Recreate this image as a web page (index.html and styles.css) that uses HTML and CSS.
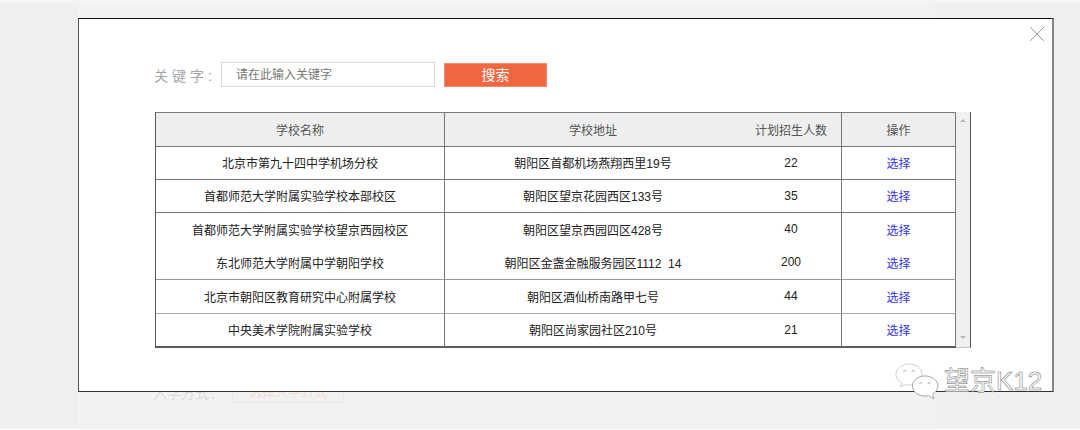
FILE: index.html
```html
<!DOCTYPE html>
<html lang="zh-CN">
<head>
<meta charset="utf-8">
<title>选择学校</title>
<link rel="stylesheet" href="styles.css">
</head>
<body>
<div class="page">
  <div class="behind">
    <span class="behind-label">入学方式：</span>
    <span class="behind-select">选择入学方式</span>
  </div>
</div>

<div class="modal">
  <svg class="close" width="16" height="16" viewBox="0 0 16 16"><path d="M1 1L15 15M15 1L1 15" fill="none" stroke="#9a9a9a" stroke-width="1"/></svg>
  <div class="search">
    <span class="label">关键字<span class="colon">:</span></span>
    <div class="input">请在此输入关键字</div>
    <div class="btn">搜索</div>
  </div>
  <div class="table-wrap">
    <table class="tbl">
      <thead>
        <tr><th class="c-name">学校名称</th><th class="c-addr">学校地址</th><th class="c-num">计划招生人数</th><th class="c-op">操作</th></tr>
      </thead>
      <tbody>
        <tr><td class="c-name">北京市第九十四中学机场分校</td><td class="c-addr">朝阳区首都机场燕翔西里19号</td><td class="c-num">22</td><td class="c-op"><a class="pick">选择</a></td></tr>
        <tr><td class="c-name">首都师范大学附属实验学校本部校区</td><td class="c-addr">朝阳区望京花园西区133号</td><td class="c-num">35</td><td class="c-op"><a class="pick">选择</a></td></tr>
        <tr class="no-line"><td class="c-name">首都师范大学附属实验学校望京西园校区</td><td class="c-addr">朝阳区望京西园四区428号</td><td class="c-num">40</td><td class="c-op"><a class="pick">选择</a></td></tr>
        <tr class="tall light"><td class="c-name">东北师范大学附属中学朝阳学校</td><td class="c-addr">朝阳区金盏金融服务园区1112&nbsp;&nbsp;14</td><td class="c-num">200</td><td class="c-op"><a class="pick">选择</a></td></tr>
        <tr class="tall lighter"><td class="c-name">北京市朝阳区教育研究中心附属学校</td><td class="c-addr">朝阳区酒仙桥南路甲七号</td><td class="c-num">44</td><td class="c-op"><a class="pick">选择</a></td></tr>
        <tr class="tall last"><td class="c-name">中央美术学院附属实验学校</td><td class="c-addr">朝阳区尚家园社区210号</td><td class="c-num">21</td><td class="c-op"><a class="pick">选择</a></td></tr>
      </tbody>
    </table>
    <div class="scrollbar">
      <svg width="8" height="5" viewBox="0 0 8 5"><path d="M4 1L7 4H1Z" fill="#b5b5b5"/></svg>
      <svg width="8" height="5" viewBox="0 0 8 5"><path d="M4 4L7 1H1Z" fill="#b5b5b5"/></svg>
    </div>
  </div>
</div>

<div class="mark">
  <svg width="44" height="37" viewBox="0 0 44 37">
    <path d="M14 1C6.800 1 1 5.600 1 11.300C1 15 3.300 18 7 20L5 24L10.500 21.500C12 22 13 22 15 22C20 22 27 18 27 11.300C27 5.600 21.200 1 14 1Z" fill="#fff" stroke="#cfcfcf"/>
    <path d="M30 13C23 13 17.500 17.300 17.500 23C17.500 28.700 23 33 30 33C31.500 33 32.500 33 33.500 32.500L39 36L37.500 31C41 29 43 26.300 43 23C43 17.300 37 13 30 13Z" fill="#fff" stroke="#a8a8a8"/>
    <path d="M8.500 8.500a1.300 1.300 0 0 1 2.500 0M17 8.500a1.300 1.300 0 0 1 2.500 0M24.500 20.500a1.200 1.200 0 0 1 2.300 0M33 20.500a1.200 1.200 0 0 1 2.300 0" fill="none" stroke="#999"/>
  </svg>
  <span class="mark-text">望京K12</span>
</div>
</body>
</html>
```

FILE: styles.css
```css
html, body {
  margin: 0;
  padding: 0;
}
body {
  width: 1080px;
  height: 430px;
  overflow: hidden;
  background: #fff;
  font-family: "Liberation Sans", "Noto Sans CJK SC", sans-serif;
  font-size: 12px;
  position: relative;
}
.page {
  box-sizing: border-box;
  height: 429px;
  background: #efefef;
  border-top: 3px solid #f5f5f5;
  padding: 0 145px 0 78px;
}
.behind {
  box-sizing: border-box;
  height: 426px;
  background: #f2f2f2;
  padding: 378px 0 0 75px;
  display: flex;
  align-items: flex-start;
  gap: 9px;
}
.behind-label {
  color: #dcdcdc;
  font-size: 14px;
  line-height: 24px;
}
.behind-select {
  box-sizing: border-box;
  width: 112px;
  height: 22px;
  border: 1px solid #e8e8e8;
  color: #f5dcd5;
  font-size: 13px;
  line-height: 20px;
  text-align: center;
}
.modal {
  position: absolute;
  left: 78px;
  top: 18px;
  box-sizing: border-box;
  width: 976px;
  height: 374px;
  background: #fff;
  border-top: 1px solid #111;
  border-left: 1px solid #555;
  border-right: 2px solid #858585;
  border-bottom: 1px solid #333;
  padding: 43px 0 0 75px;
}
.close {
  position: absolute;
  right: 7px;
  top: 7px;
}
.search {
  display: flex;
  align-items: center;
  height: 25px;
}
.label {
  width: 67px;
  color: #a6a6a6;
  font-size: 14px;
  letter-spacing: 4px;
  white-space: nowrap;
}
.colon {
  letter-spacing: 0;
}
.input {
  box-sizing: border-box;
  width: 214px;
  height: 25px;
  border: 1px solid #d9d9d9;
  padding-left: 14px;
  color: #777;
  line-height: 25px;
}
.btn {
  box-sizing: border-box;
  width: 103px;
  height: 24px;
  margin-left: 9px;
  background: #f26641;
  border: 1px solid #f58a6d;
  color: #fff;
  font-size: 14px;
  line-height: 22px;
  text-align: center;
}
.table-wrap {
  display: flex;
  width: 816px;
  margin: 25px 0 0 1px;
}
.tbl {
  width: 801px;
  table-layout: fixed;
  border-collapse: separate;
  border-spacing: 0;
  border-top: 1px solid #7d7a7a;
  border-left: 1px solid #5a5a5a;
  color: #222;
}
.tbl th, .tbl td {
  box-sizing: border-box;
  padding: 0 0 1px;
  height: 33px;
  text-align: center;
  font-weight: 400;
  border-bottom: 1px solid #7d7878;
}
.tbl th {
  height: 34px;
  background: #eeeeee;
  color: #555;
}
.c-name {
  width: 289px;
  border-right: 1px solid #777;
}
.c-addr {
  width: 296px;
}
.c-num {
  width: 101px;
  border-right: 1px solid #777;
}
.c-op {
  border-right: 1px solid #777;
}
.tbl .no-line td {
  border-bottom: 0;
}
.tbl .tall td {
  height: 34px;
}
.tbl .light td {
  border-bottom-color: #999;
}
.tbl .lighter td {
  border-bottom-color: #aaa;
}
.tbl .last td {
  border-bottom: 2px solid #5c5c5c;
}
.pick {
  color: #3535e6;
}
.scrollbar {
  box-sizing: border-box;
  width: 15px;
  background: #f0f0f0;
  border-right: 1px solid #555;
  border-bottom: 1px solid #c4c4c4;
  display: flex;
  flex-direction: column;
  justify-content: space-between;
  align-items: center;
  padding: 6px 0 7px;
}
.scrollbar svg {
  display: block;
}
.mark {
  position: absolute;
  left: 895px;
  top: 363px;
  display: flex;
  align-items: flex-start;
  gap: 5px;
}
.mark svg {
  display: block;
}
.mark-text {
  color: #fff;
  font-size: 26px;
  line-height: 36px;
  -webkit-text-stroke: 0.5px #6f6f6f;
}
```
